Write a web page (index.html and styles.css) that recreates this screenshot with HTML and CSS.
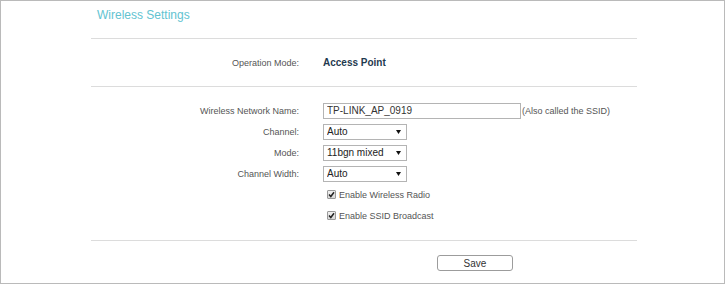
FILE: index.html
```html
<!DOCTYPE html>
<html lang="en">
<head>
    <meta charset="UTF-8">
    <meta name="viewport" content="width=device-width, initial-scale=1.0">
    <title>Wireless Settings</title>
    <link rel="stylesheet" href="styles.css">
</head>
<body>

<div class="frame">
    <div class="panel">
        <h1 class="title">Wireless Settings</h1>

        <div class="section op-section">
            <div class="row">
                <span class="label">Operation Mode:</span>
                <span class="value strong">Access Point</span>
            </div>
        </div>

        <div class="section form-section">
            <div class="row">
                <label class="label" for="ssid">Wireless Network Name:</label>
                <div class="value">
                    <input type="text" id="ssid" class="text-field" value="TP-LINK_AP_0919">
                    <span class="hint">(Also called the SSID)</span>
                </div>
            </div>
            <div class="row">
                <label class="label" for="channel">Channel:</label>
                <div class="value">
                    <div class="select-wrap">
                        <select id="channel">
                            <option>Auto</option>
                        </select>
                        <svg class="arrow" width="5" height="4" viewBox="0 0 5 4"><path d="M0 0H5L2.5 4Z" fill="#111"/></svg>
                    </div>
                </div>
            </div>
            <div class="row">
                <label class="label" for="mode">Mode:</label>
                <div class="value">
                    <div class="select-wrap">
                        <select id="mode">
                            <option>11bgn mixed</option>
                        </select>
                        <svg class="arrow" width="5" height="4" viewBox="0 0 5 4"><path d="M0 0H5L2.5 4Z" fill="#111"/></svg>
                    </div>
                </div>
            </div>
            <div class="row">
                <label class="label" for="width">Channel Width:</label>
                <div class="value">
                    <div class="select-wrap">
                        <select id="width">
                            <option>Auto</option>
                        </select>
                        <svg class="arrow" width="5" height="4" viewBox="0 0 5 4"><path d="M0 0H5L2.5 4Z" fill="#111"/></svg>
                    </div>
                </div>
            </div>
            <div class="row">
                <span></span>
                <label class="value check">
                    <span class="box"><svg width="7" height="7" viewBox="0 0 7 7"><path d="M1 3.6L2.8 5.5L6 1.2" fill="none" stroke="#222" stroke-width="1.5"/></svg></span>
                    Enable Wireless Radio
                </label>
            </div>
            <div class="row">
                <span></span>
                <label class="value check">
                    <span class="box"><svg width="7" height="7" viewBox="0 0 7 7"><path d="M1 3.6L2.8 5.5L6 1.2" fill="none" stroke="#222" stroke-width="1.5"/></svg></span>
                    Enable SSID Broadcast
                </label>
            </div>
        </div>

        <div class="section action-section">
            <button class="save-btn">Save</button>
        </div>
    </div>
</div>

</body>
</html>
```

FILE: styles.css
```css
body {
    margin: 0;
    font-family: "Liberation Sans", Arial, sans-serif;
    background: #fff;
}
.frame {
    width: 723px;
    height: 282px;
    border: 1px solid #bababa;
}
.panel {
    margin-left: 90px;
    width: 546px;
}
.title {
    margin: 0;
    height: 37px;
    box-sizing: border-box;
    padding: 7px 0 0 6px;
    font-size: 12px;
    line-height: 14px;
    font-weight: normal;
    color: #62c3d1;
}
.section {
    border-top: 1px solid #dcdcdc;
}
.row {
    display: grid;
    grid-template-columns: 208px 1fr;
    column-gap: 24px;
    align-items: center;
    height: 21px;
}
.op-section .row {
    height: 47px;
}
.form-section {
    padding: 13px 0 14px;
}
.label {
    text-align: right;
    font-size: 9px;
    color: #555;
}
.value {
    display: flex;
    align-items: center;
    font-size: 9px;
    color: #555;
}
.strong {
    font-size: 10px;
    font-weight: bold;
    color: #1f3a50;
}
.text-field {
    width: 198px;
    height: 16px;
    box-sizing: border-box;
    margin: 0;
    padding: 0 3px;
    border: 1px solid #b4b4b4;
    font: 10px "Liberation Sans", Arial, sans-serif;
    color: #333;
    outline: none;
}
.hint {
    margin-left: 1px;
}
.select-wrap {
    position: relative;
    width: 84px;
    height: 16px;
}
.select-wrap select {
    appearance: none;
    -webkit-appearance: none;
    width: 100%;
    height: 100%;
    margin: 0;
    padding: 0 3px;
    border: 1px solid #b4b4b4;
    border-radius: 0;
    background: #fff;
    font: 10px "Liberation Sans", Arial, sans-serif;
    color: #222;
}
.select-wrap .arrow {
    position: absolute;
    right: 6px;
    top: 6px;
    pointer-events: none;
}
.check {
    padding-left: 4px;
    gap: 3px;
}
.box {
    display: flex;
    align-items: center;
    justify-content: center;
    width: 9px;
    height: 9px;
    box-sizing: border-box;
    border: 1px solid #9a9a9a;
    border-radius: 1px;
    background: linear-gradient(#f0f0f0, #d8d8d8);
}
.action-section {
    display: flex;
    padding: 14px 0 0 346px;
}
.save-btn {
    width: 76px;
    height: 16px;
    margin: 0;
    padding: 0;
    border: 1px solid #9c9c9c;
    border-radius: 3px;
    background: #fff;
    font: 10px "Liberation Sans", Arial, sans-serif;
    color: #333;
}
```
